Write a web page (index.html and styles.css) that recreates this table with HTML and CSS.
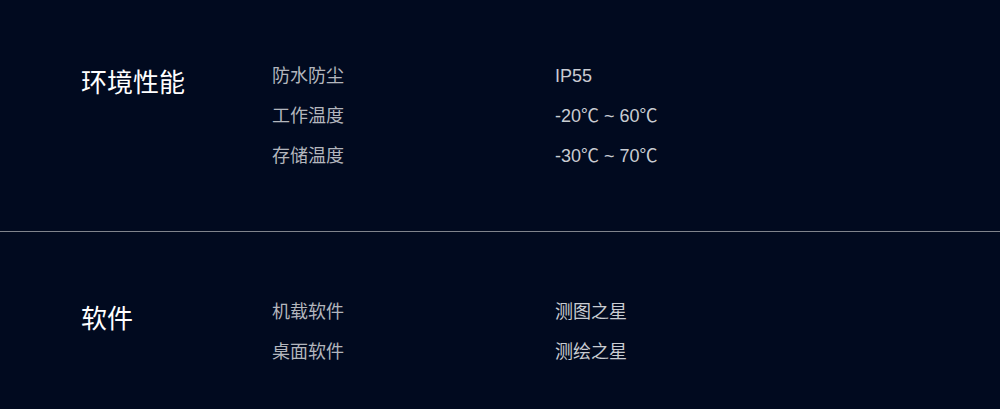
FILE: index.html
```html
<!DOCTYPE html>
<html lang="zh-CN">
<head>
<meta charset="utf-8">
<link rel="stylesheet" href="styles.css">
</head>
<body>
<div class="spec">
  <section class="group">
    <h2 class="group-title">环境性能</h2>
    <dl class="rows">
      <div class="row"><dt>防水防尘</dt><dd>IP55</dd></div>
      <div class="row"><dt>工作温度</dt><dd>-20℃ ~ 60℃</dd></div>
      <div class="row"><dt>存储温度</dt><dd>-30℃ ~ 70℃</dd></div>
    </dl>
  </section>
  <section class="group">
    <h2 class="group-title">软件</h2>
    <dl class="rows">
      <div class="row"><dt>机载软件</dt><dd>测图之星</dd></div>
      <div class="row"><dt>桌面软件</dt><dd>测绘之星</dd></div>
    </dl>
  </section>
</div>
</body>
</html>
```

FILE: styles.css
```css
html, body {
  margin: 0;
  padding: 0;
  background: #010a1f;
  height: 100%;
  overflow: hidden;
}
body {
  font-family: "Liberation Sans", "Noto Sans CJK SC", sans-serif;
}
.spec {
  display: flex;
  flex-direction: column;
}
.group {
  display: grid;
  grid-template-columns: 191px 1fr;
  padding: 60px 0 55px 81px;
  border-top: 1px solid #80848c;
}
.group:first-child {
  border-top: none;
  padding-top: 56px;
}
.group-title {
  margin: 0;
  padding-top: 7px;
  font-size: 26px;
  line-height: 40px;
  font-weight: normal;
  color: #ffffff;
}
.rows {
  margin: 0;
  display: flex;
  flex-direction: column;
}
.row {
  display: grid;
  grid-template-columns: 283px 1fr;
  font-size: 18px;
  line-height: 40px;
}
.row dt {
  color: #b3b6bd;
}
.row dd {
  margin: 0;
  color: #c9ccd2;
}
```
